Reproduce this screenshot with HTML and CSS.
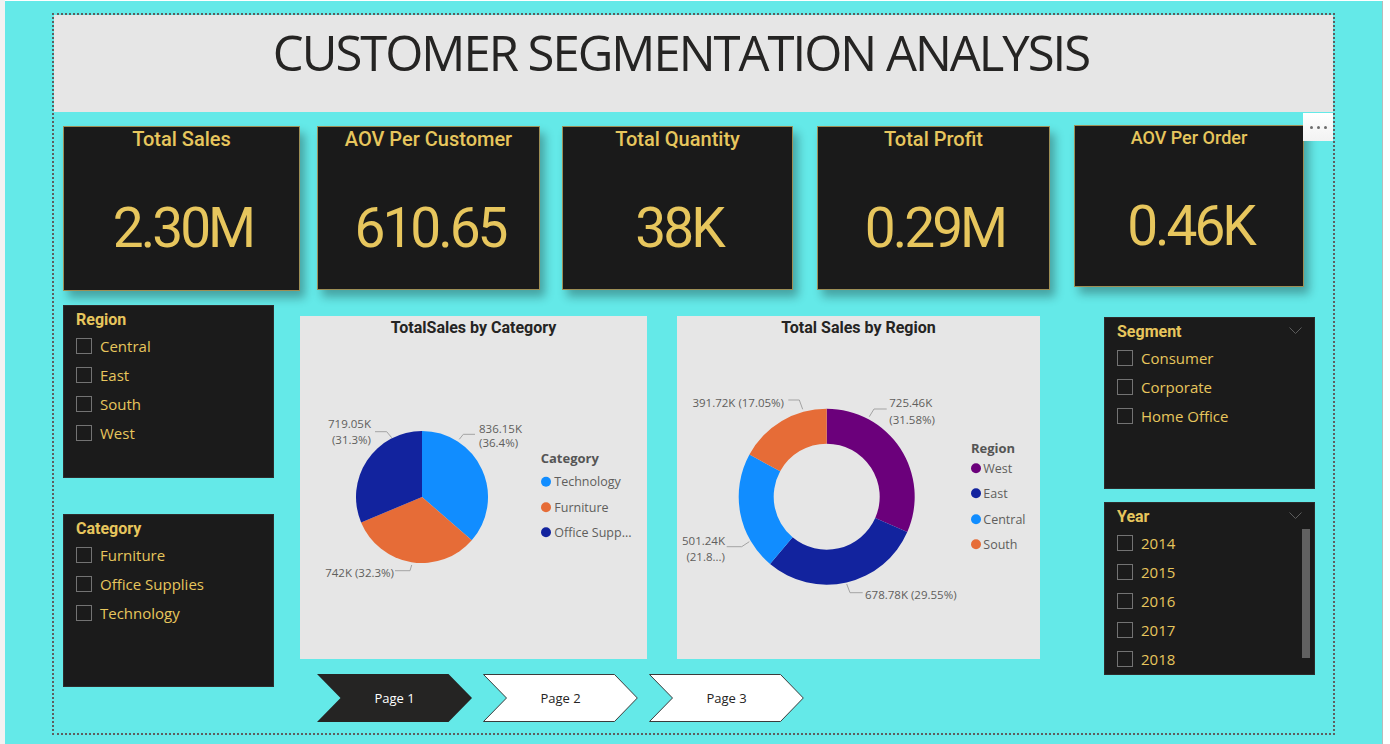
FILE: index.html
```html
<!DOCTYPE html>
<html>
<head>
<meta charset="utf-8">
<title>Customer Segmentation Analysis</title>
<link rel="stylesheet" href="styles.css">
</head>
<body>
<div class="screen">
  <div class="frame">
    <header class="title-bar"><h1>CUSTOMER SEGMENTATION ANALYSIS</h1></header>

    <section class="kpis">
      <div class="kpi k1"><div class="kpi-title">Total Sales</div><div class="kpi-value">2.30M</div></div>
      <div class="kpi k2"><div class="kpi-title">AOV Per Customer</div><div class="kpi-value">610.65</div></div>
      <div class="kpi k3"><div class="kpi-title">Total Quantity</div><div class="kpi-value">38K</div></div>
      <div class="kpi k4"><div class="kpi-title">Total Profit</div><div class="kpi-value">0.29M</div></div>
      <div class="kpi k5"><div class="kpi-title">AOV Per Order</div><div class="kpi-value">0.46K</div></div>
      <div class="more"><span></span><span></span><span></span></div>
    </section>

    <section class="main">
      <div class="col-left">
        <div class="slicer">
          <div class="slicer-title">Region</div>
          <ul class="slicer-list">
            <li><span class="cb"></span>Central</li>
            <li><span class="cb"></span>East</li>
            <li><span class="cb"></span>South</li>
            <li><span class="cb"></span>West</li>
          </ul>
        </div>
        <div class="slicer">
          <div class="slicer-title">Category</div>
          <ul class="slicer-list">
            <li><span class="cb"></span>Furniture</li>
            <li><span class="cb"></span>Office Supplies</li>
            <li><span class="cb"></span>Technology</li>
          </ul>
        </div>
      </div>

      <div class="col-center">
        <div class="charts">
          <div class="chart pie">
            <svg width="347" height="343" viewBox="0 0 347 343">
              <text class="ct" x="173.5" y="17" text-anchor="middle">TotalSales by Category</text>
              <path fill="#118dff" d="M122,181 L122,115 A66,66 0 0 1 171.77,224.35 Z"/>
              <path fill="#e66c37" d="M122,181 L171.77,224.35 A66,66 0 0 1 61.1,206.45 Z"/>
              <path fill="#12239e" d="M122,181 L61.1,206.45 A66,66 0 0 1 122,115 Z"/>
              <polyline class="ld" points="159.3,123.3 163.3,118.3 175,118.3"/>
              <polyline class="ld" points="75,115.7 86.7,115.7 91.7,121.7"/>
              <polyline class="ld" points="95,254.7 110,254.7 111.7,249"/>
              <text class="dl" x="179" y="116.5">836.15K</text>
              <text class="dl" x="179" y="131">(36.4%)</text>
              <text class="dl" x="71" y="112" text-anchor="end">719.05K</text>
              <text class="dl" x="71" y="128" text-anchor="end">(31.3%)</text>
              <text class="dl" x="94" y="260.5" text-anchor="end">742K (32.3%)</text>
              <text class="lt" x="240.7" y="147">Category</text>
              <circle cx="246" cy="165.7" r="5" fill="#118dff"/>
              <circle cx="246" cy="191.3" r="5" fill="#e66c37"/>
              <circle cx="246" cy="216.3" r="5" fill="#12239e"/>
              <text class="li" x="254.3" y="170.3">Technology</text>
              <text class="li" x="254.3" y="195.8">Furniture</text>
              <text class="li" x="254.3" y="220.8">Office Supp...</text>
            </svg>
          </div>
          <div class="chart donut">
            <svg width="363" height="343" viewBox="0 0 363 343">
              <text class="ct" x="181.5" y="16.7" text-anchor="middle">Total Sales by Region</text>
              <path fill="#6b007b" d="M149.7,92.7 A88,88 0 0 1 230.28,216.06 L198.23,202 A53,53 0 0 0 149.7,127.7 Z"/>
              <path fill="#12239e" d="M230.28,216.06 A88,88 0 0 1 93.05,248.05 L115.58,221.26 A53,53 0 0 0 198.23,202 Z"/>
              <path fill="#118dff" d="M93.05,248.05 A88,88 0 0 1 72.45,138.55 L103.18,155.31 A53,53 0 0 0 115.58,221.26 Z"/>
              <path fill="#e66c37" d="M72.45,138.55 A88,88 0 0 1 149.7,92.7 L149.7,127.7 A53,53 0 0 0 103.18,155.31 Z"/>
              <polyline class="ld" points="192.3,100.7 197,93 209.7,93"/>
              <polyline class="ld" points="111.3,84 122.3,84 125.7,93.3"/>
              <polyline class="ld" points="49.7,230.7 64.7,230.7 72.3,225.7"/>
              <polyline class="ld" points="169.7,268 173,276.7 185.7,276.7"/>
              <text class="dl" x="212.3" y="91.3">725.46K</text>
              <text class="dl" x="212.3" y="107.7">(31.58%)</text>
              <text class="dl" x="107" y="91.3" text-anchor="end">391.72K (17.05%)</text>
              <text class="dl" x="48" y="229" text-anchor="end">501.24K</text>
              <text class="dl" x="48" y="244.5" text-anchor="end">(21.8...)</text>
              <text class="dl" x="188" y="283.3">678.78K (29.55%)</text>
              <text class="lt" x="294" y="136.5">Region</text>
              <circle cx="299" cy="152.3" r="5" fill="#6b007b"/>
              <circle cx="299" cy="177.3" r="5" fill="#12239e"/>
              <circle cx="299" cy="203.3" r="5" fill="#118dff"/>
              <circle cx="299" cy="228.3" r="5" fill="#e66c37"/>
              <text class="li" x="306.3" y="157.3">West</text>
              <text class="li" x="306.3" y="182.3">East</text>
              <text class="li" x="306.3" y="208.3">Central</text>
              <text class="li" x="306.3" y="233.3">South</text>
            </svg>
          </div>
        </div>
        <nav class="pages">
          <div class="page active">
            <svg width="155" height="48" viewBox="0 0 155 48"><polygon points="0,0 131.5,0 155,24 131.5,48 0,48 23.5,24" fill="#252423"/></svg>
            <span>Page 1</span>
          </div>
          <div class="page">
            <svg width="155" height="48" viewBox="0 0 155 48"><polygon points="0.5,0.5 131.5,0.5 154.3,24 131.5,47.5 0.5,47.5 23.5,24" fill="#ffffff" stroke="#3b3b3b" stroke-width="1"/></svg>
            <span>Page 2</span>
          </div>
          <div class="page">
            <svg width="155" height="48" viewBox="0 0 155 48"><polygon points="0.5,0.5 131.5,0.5 154.3,24 131.5,47.5 0.5,47.5 23.5,24" fill="#ffffff" stroke="#3b3b3b" stroke-width="1"/></svg>
            <span>Page 3</span>
          </div>
        </nav>
      </div>

      <div class="col-right">
        <div class="slicer seg">
          <div class="slicer-title">Segment</div>
          <svg class="chev" width="14" height="8" viewBox="0 0 14 8"><polyline points="0.5,0.5 6.5,6.5 12.5,0.5" fill="none" stroke="#5c5c5c" stroke-width="1"/></svg>
          <ul class="slicer-list">
            <li><span class="cb"></span>Consumer</li>
            <li><span class="cb"></span>Corporate</li>
            <li><span class="cb"></span>Home Office</li>
          </ul>
        </div>
        <div class="slicer year">
          <div class="slicer-title">Year</div>
          <svg class="chev" width="14" height="8" viewBox="0 0 14 8"><polyline points="0.5,0.5 6.5,6.5 12.5,0.5" fill="none" stroke="#5c5c5c" stroke-width="1"/></svg>
          <ul class="slicer-list">
            <li><span class="cb"></span>2014</li>
            <li><span class="cb"></span>2015</li>
            <li><span class="cb"></span>2016</li>
            <li><span class="cb"></span>2017</li>
            <li><span class="cb"></span>2018</li>
          </ul>
          <div class="scrollbar"></div>
        </div>
      </div>
    </section>
  </div>
</div>
</body>
</html>
```

FILE: styles.css
```css
* { box-sizing: border-box; margin: 0; padding: 0; }

html, body { width: 1390px; height: 744px; overflow: hidden; }

body {
  background: linear-gradient(to right, #f2f2f2 0, #f2f2f2 5px, #ffffff 5px);
  font-family: "Open Sans", "Noto Sans", sans-serif;
}

.screen {
  margin-left: 5px;
  margin-top: 1px;
  width: 1378px;
  height: 743px;
  background: #64e9e8;
  border-right: 1px solid #b9b9b9;
  padding: 12px 0 0 47px;
}

.frame {
  width: 1283px;
  height: 722px;
  border: 2px dotted #5e5e5e;
}

/* Title */
.title-bar {
  height: 97px;
  background: #e6e6e6;
  text-align: center;
  padding: 13px 25px 0 0;
}
.title-bar h1 {
  font-family: "Open Sans", sans-serif;
  font-weight: 400;
  font-size: 49px;
  line-height: 49px;
  letter-spacing: -2px;
  color: #252423;
}

/* KPI cards */
.kpis {
  position: relative;
  display: flex;
  align-items: flex-start;
  margin-top: 14px;
  height: 165px;
}
.kpi {
  height: 164px;
  background: #1a1a1a;
  border: 1px solid #9d8e55;
  box-shadow: 5px 7px 9px rgba(0, 0, 0, 0.3);
  display: flex;
  flex-direction: column;
  align-items: center;
}
.k1 { margin-left: 9px; width: 237px; height: 165px; }
.k2 { margin-left: 17px; width: 223px; }
.k3 { margin-left: 22px; width: 231px; }
.k4 { margin-left: 24px; width: 233px; }
.k5 { margin-left: 24px; width: 230px; height: 162px; margin-top: -1px; }

.kpi-title {
  font-family: Roboto, sans-serif;
  font-weight: 500;
  font-size: 20px;
  line-height: 24px;
  color: #e7c65d;
}
.k5 .kpi-title { font-size: 18px; }
.kpi-value {
  font-family: Roboto, sans-serif;
  font-weight: 400;
  font-size: 55px;
  line-height: 60px;
  letter-spacing: -3px;
  padding-left: 3px;
  color: #e7c65d;
  margin-top: 47px;
}
.k5 .kpi-value { margin-top: 46px; }

.more {
  position: absolute;
  top: -13px;
  right: 0;
  width: 30px;
  height: 28px;
  background: linear-gradient(#ffffff, #f2f2f2);
  display: flex;
  align-items: center;
  justify-content: center;
  gap: 4px;
}
.more span {
  width: 3px;
  height: 3px;
  border-radius: 50%;
  background: #6d6d6d;
}

/* Main area */
.main {
  display: flex;
  align-items: flex-start;
  margin-top: 14px;
}

.col-left {
  margin-left: 9px;
  width: 211px;
  display: flex;
  flex-direction: column;
  gap: 36px;
}

.slicer {
  position: relative;
  height: 173px;
  background: #1b1b1b;
  border: 1px solid #2c2c2c;
  padding: 4px 0 0 12px;
}
.slicer-title {
  font-family: Roboto, sans-serif;
  font-weight: 700;
  font-size: 16px;
  line-height: 20px;
  color: #e7c65d;
}
.slicer-list {
  list-style: none;
  margin-top: 1px;
}
.slicer-list li {
  display: flex;
  align-items: center;
  height: 29px;
  font-family: "Open Sans", sans-serif;
  font-size: 15px;
  color: #e7c65d;
}
.cb {
  width: 16px;
  height: 16px;
  border: 1px solid #737373;
  margin-right: 8px;
  flex: none;
}

.chev {
  position: absolute;
  left: 184px;
  top: 9px;
}
.scrollbar {
  position: absolute;
  left: 197px;
  top: 26px;
  width: 8px;
  height: 129px;
  background: #616161;
}

/* Charts */
.col-center {
  margin-left: 26px;
  margin-top: 11px;
}
.charts {
  display: flex;
  align-items: flex-start;
  gap: 30px;
}
.chart { background: #e6e6e6; }
.chart svg { display: block; }
.pie { width: 347px; height: 343px; }
.donut { width: 363px; height: 343px; }

.ct {
  font-family: Roboto, sans-serif;
  font-weight: 700;
  font-size: 16px;
  fill: #252423;
}
.dl {
  font-family: "Open Sans", sans-serif;
  font-size: 11.5px;
  fill: #605e5c;
}
.lt {
  font-family: "Open Sans", sans-serif;
  font-weight: 700;
  font-size: 13px;
  fill: #555555;
}
.li {
  font-family: "Open Sans", sans-serif;
  font-size: 12.5px;
  fill: #605e5c;
}
.ld {
  fill: none;
  stroke: #a3a3a3;
  stroke-width: 1;
}

/* Page navigator */
.pages {
  display: flex;
  gap: 11px;
  margin-top: 15px;
  padding-left: 17px;
}
.page {
  position: relative;
  width: 155px;
  height: 48px;
  display: flex;
  align-items: center;
  justify-content: center;
  font-family: "Open Sans", sans-serif;
  font-size: 13px;
  color: #252423;
}
.page svg {
  position: absolute;
  left: 0;
  top: 0;
}
.page span { position: relative; }
.page.active { color: #ffffff; }

/* Right column */
.col-right {
  margin-left: 64px;
  margin-top: 12px;
  width: 211px;
  display: flex;
  flex-direction: column;
  gap: 13px;
}
.seg { height: 172px; }
.year { height: 173px; }
```
